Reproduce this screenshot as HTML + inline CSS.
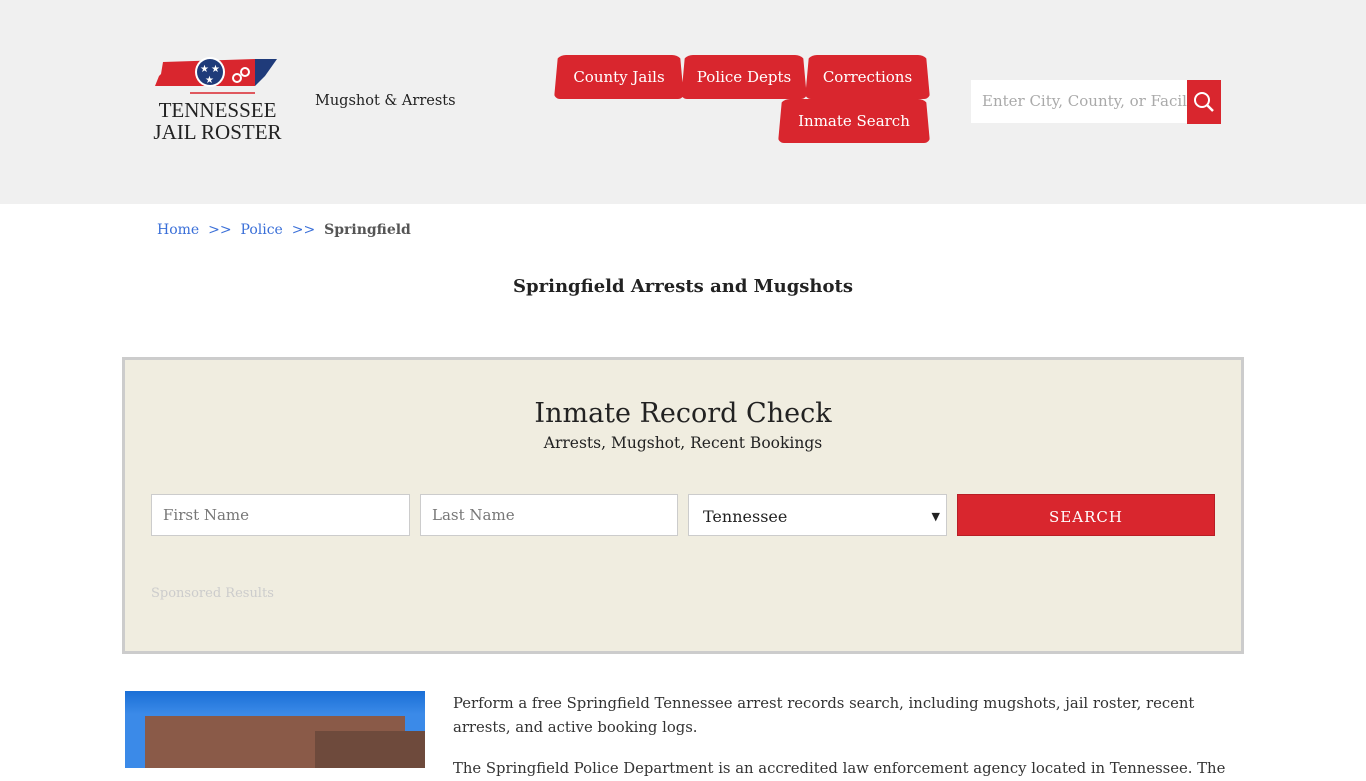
<!DOCTYPE html>
<html><head><meta charset="utf-8"><style>
*{box-sizing:border-box;margin:0;padding:0}
body{width:1366px;height:768px;overflow:hidden;background:#fff;font-family:"DejaVu Serif","Liberation Serif",serif;color:#222}
.hdr{position:absolute;left:0;top:0;width:1366px;height:204px;background:#f0f0f0}
.tab{position:absolute;background:#d9262e;color:#fff;font-size:15px;height:44px;line-height:44px;text-align:center;border-radius:12px 12px 6px 6px;clip-path:polygon(4px 0,calc(100% - 4px) 0,100% 100%,0 100%)}
.inp{position:absolute;background:#fff;border:1px solid #ccc;height:42px;font-size:15px;color:#777;padding-left:11px;line-height:40px}
</style></head><body>
<div class="hdr">
  <svg style="position:absolute;left:155px;top:56px" width="125" height="44" viewBox="0 0 125 44">
    <polygon points="8,6 70,4 70,30 0,30 4,20 6,18" fill="#d9262e"/>
    <polygon points="70,4 100,3 100,30 70,30" fill="#d9262e"/>
    <polygon points="100,3 122,3 110,20 100,30" fill="#1f3b7a"/>
    <circle cx="55" cy="16" r="15" fill="#fff"/>
    <circle cx="55" cy="16" r="13" fill="#1f3b7a"/>
    <text x="45" y="16" fill="#fff" font-size="10">★</text><text x="56" y="16" fill="#fff" font-size="10">★</text><text x="50" y="27" fill="#fff" font-size="10">★</text>
    <circle cx="82" cy="22" r="4" fill="none" stroke="#fff" stroke-width="2"/><circle cx="90" cy="16" r="4" fill="none" stroke="#fff" stroke-width="2"/>
    <line x1="35" y1="37" x2="100" y2="37" stroke="#d9262e" stroke-width="1.5"/>
  </svg>
  <div style="position:absolute;left:150px;top:99px;width:135px;text-align:center;font-family:'Liberation Serif',serif;font-size:21px;line-height:22px;color:#222;white-space:nowrap">TENNESSEE<br>JAIL ROSTER</div>
  <div style="position:absolute;left:315px;top:93px;font-size:14.5px">Mugshot &amp; Arrests</div>
  <div class="tab" style="left:554px;top:55px;width:130px">County Jails</div>
  <div class="tab" style="left:681px;top:55px;width:126px">Police Depts</div>
  <div class="tab" style="left:805px;top:55px;width:125px">Corrections</div>
  <div class="tab" style="left:778px;top:99px;width:152px">Inmate Search</div>
  <div style="position:absolute;left:971px;top:80px;width:216px;height:43px;background:#fff;font-size:15px;color:#aaa;line-height:43px;padding-left:11px;white-space:nowrap;overflow:hidden">Enter City, County, or Facil</div>
  <div style="position:absolute;left:1187px;top:80px;width:34px;height:44px;background:#d9262e">
    <svg width="34" height="44"><circle cx="15" cy="20" r="7" fill="none" stroke="#fff" stroke-width="2"/><line x1="20" y1="25" x2="26" y2="31" stroke="#fff" stroke-width="2.5"/></svg>
  </div>
</div>
<div style="position:absolute;left:157px;top:222px;font-size:14px;color:#3a6fd8;white-space:nowrap">Home &nbsp;&gt;&gt;&nbsp; Police &nbsp;&gt;&gt;&nbsp; <b style="color:#555">Springfield</b></div>
<div style="position:absolute;left:0;width:1366px;top:276px;text-align:center;font-size:18px;font-weight:bold;color:#222">Springfield Arrests and Mugshots</div>
<div style="position:absolute;left:122px;top:357px;width:1122px;height:297px;background:#f0ede0;border:3px solid #ccc">
  <div style="position:absolute;left:0;width:100%;top:38px;text-align:center;font-size:27px">Inmate Record Check</div>
  <div style="position:absolute;left:0;width:100%;top:74px;text-align:center;font-size:15.5px">Arrests, Mugshot, Recent Bookings</div>
  <div class="inp" style="left:26px;top:134px;width:259px">First Name</div>
  <div class="inp" style="left:295px;top:134px;width:258px">Last Name</div>
  <div class="inp" style="left:563px;top:134px;width:259px;color:#222;font-size:16px;padding-left:14px;line-height:44px">Tennessee<span style="position:absolute;right:6px;font-size:11px">▼</span></div>
  <div style="position:absolute;left:832px;top:134px;width:258px;height:42px;background:#d9262e;border:1px solid #b81e25;color:#fff;text-align:center;line-height:44px;font-size:15px;letter-spacing:1px">SEARCH</div>
  <div style="position:absolute;left:26px;top:226px;font-size:13px;color:#ccc">Sponsored Results</div>
</div>
<div style="position:absolute;left:125px;top:691px;width:300px;height:77px;background:linear-gradient(#1a6fd6,#3b8ae8 30%,#3b8ae8)">
  <div style="position:absolute;left:20px;top:25px;width:260px;height:52px;background:#8a5a48"></div>
  <div style="position:absolute;left:190px;top:40px;width:110px;height:37px;background:#6e4a3c"></div>
</div>
<div style="position:absolute;left:453px;top:692px;width:760px;font-size:14.8px;line-height:24px;color:#333">Perform a free Springfield Tennessee arrest records search, including mugshots, jail roster, recent arrests, and active booking logs.</div>
<div style="position:absolute;left:453px;top:757px;width:790px;font-size:14.8px;line-height:24px;color:#333;white-space:nowrap;overflow:hidden">The Springfield Police Department is an accredited law enforcement agency located in Tennessee. The</div>
</body></html>
